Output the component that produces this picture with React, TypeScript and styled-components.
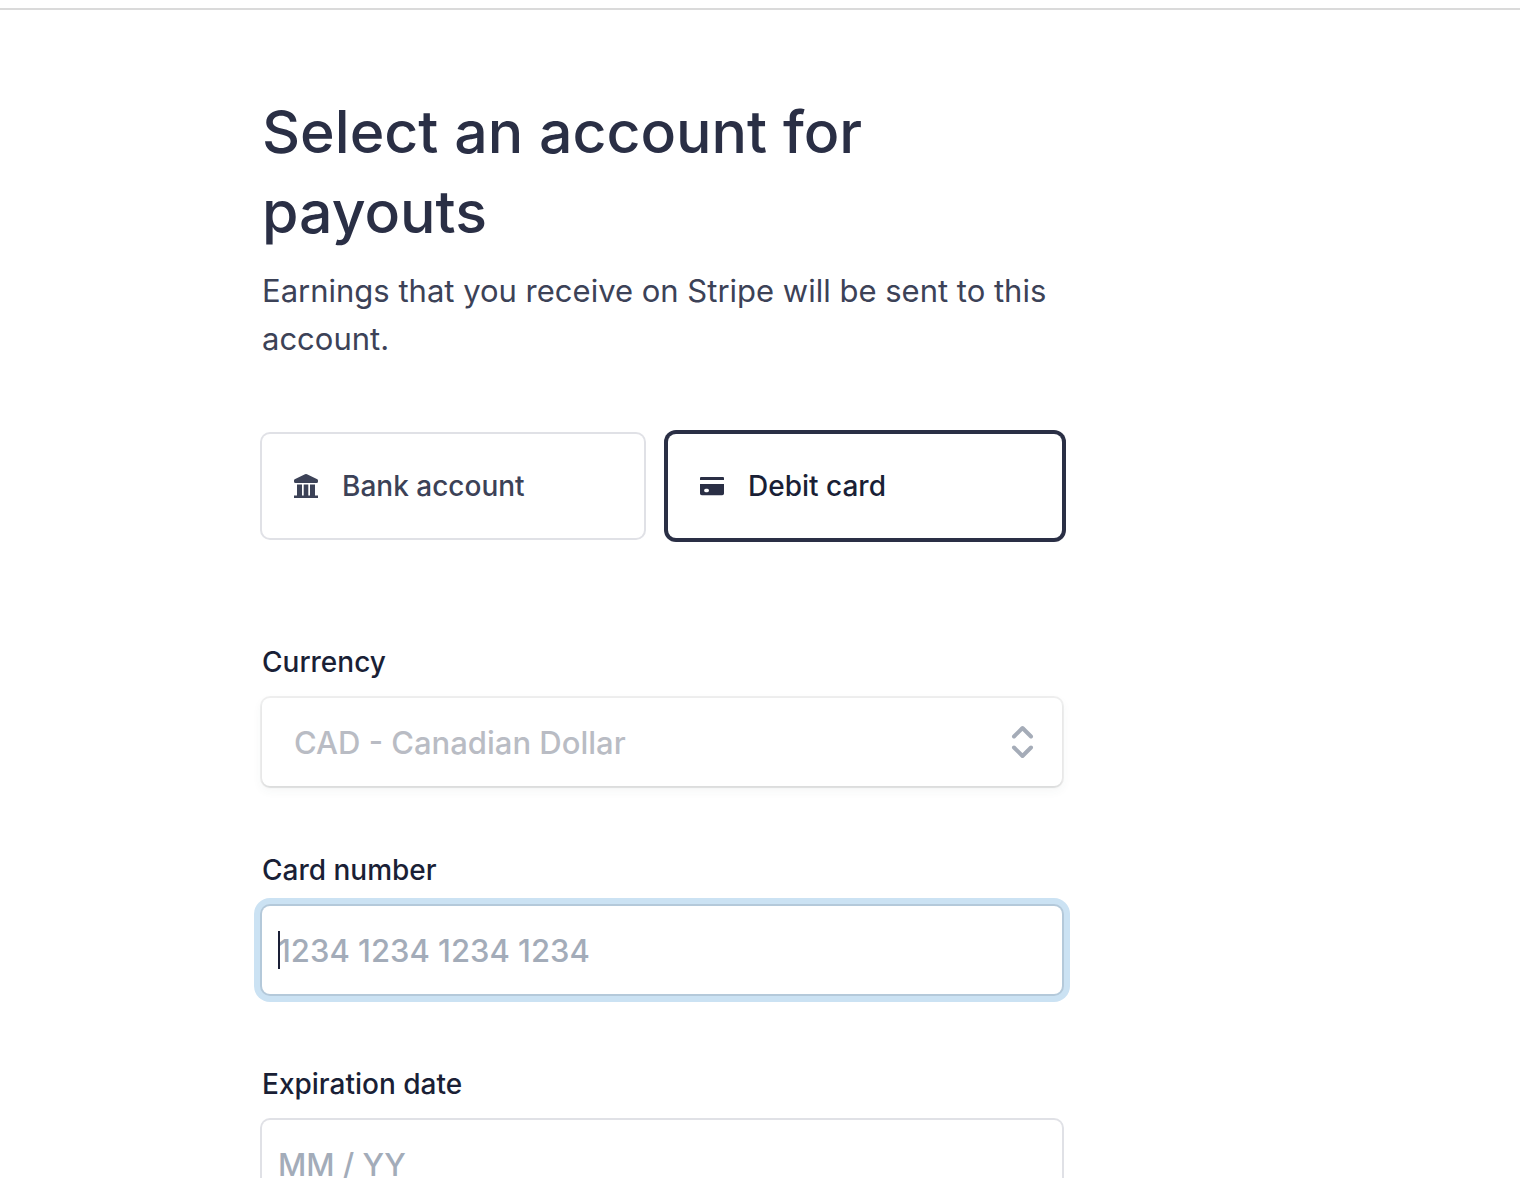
import React, { useState } from 'react';
import styled, { createGlobalStyle, css } from 'styled-components';

const GlobalStyle = createGlobalStyle`
  *, *::before, *::after { box-sizing: border-box; }
  body {
    margin: 0;
    background: #ffffff;
    color: #1a1f36;
    font-family: Inter, "Liberation Sans", sans-serif;
    -webkit-font-smoothing: antialiased;
  }
`;

const Page = styled.div`
  height: 100vh;
  overflow-y: auto;
  scrollbar-width: none;
`;

const TopBar = styled.header`
  height: 10px;
  border-bottom: 2px solid #dadada;
`;

const Content = styled.main`
  max-width: 1062px;
  padding: 82px 0 80px 262px;
`;

const Title = styled.h1`
  margin: 0 0 15px;
  color: #2a2f45;
  font-size: 59px;
  font-weight: 500;
  line-height: 80px;
`;

const Lead = styled.p`
  margin: 0 0 71px;
  color: #3c4257;
  font-size: 31px;
  line-height: 48px;
`;

const Methods = styled.div`
  display: grid;
  grid-template-columns: 382fr 394fr;
  gap: 24px;
  margin-bottom: 104px;
`;

const Method = styled.label<{ $selected: boolean }>`
  position: relative;
  display: flex;
  align-items: center;
  gap: 24px;
  height: 104px;
  padding: 0 32px;
  border-radius: 8px;
  color: #3c4257;
  font-size: 28px;
  font-weight: 500;
  line-height: 40px;
  cursor: pointer;
  box-shadow: 0 0 0 2px #e0e1e6;
  ${(p) =>
    p.$selected &&
    css`
      color: #1a1f36;
      box-shadow: 0 0 0 4px #2a2f45;
    `}
`;

const MethodInput = styled.input`
  position: absolute;
  inset: 0;
  margin: 0;
  opacity: 0;
  cursor: pointer;
`;

const MethodIcon = styled.svg`
  flex: none;
  width: 24px;
  height: 24px;
`;

const Form = styled.form`
  display: grid;
`;

const Field = styled.div<{ $spacing?: number }>`
  display: grid;
  gap: 16px;
  margin-bottom: ${(p) => p.$spacing ?? 64}px;
`;

const Label = styled.label`
  font-size: 28px;
  font-weight: 500;
  line-height: 40px;
`;

const Control = styled.div`
  position: relative;
  display: grid;
`;

const controlStyle = css`
  width: 100%;
  height: 88px;
  border: 0;
  border-radius: 8px;
  outline: none;
  background: #ffffff;
  font-family: inherit;
  font-size: 31px;
  font-weight: 500;
`;

const Select = styled.select`
  ${controlStyle}
  appearance: none;
  padding: 0 64px 0 32px;
  color: #b9bcc4;
  opacity: 1;
  box-shadow: 0 0 0 2px rgba(0, 0, 0, 0.06), 0 2px 2px rgba(0, 0, 0, 0.06),
    0 4px 10px 2px rgba(60, 66, 87, 0.04);
`;

const SelectArrows = styled.svg`
  position: absolute;
  top: 26px;
  right: 28px;
  width: 24px;
  height: 36px;
  fill: none;
  stroke: #a5acb8;
  stroke-width: 4;
  stroke-linecap: round;
  stroke-linejoin: round;
  pointer-events: none;
`;

const Input = styled.input<{ $active?: boolean }>`
  ${controlStyle}
  padding: 0 16px;
  color: #3c4257;
  box-shadow: 0 0 0 2px #e0e1e6;
  &::placeholder {
    color: #a3acb9;
    opacity: 1;
  }
  ${(p) =>
    p.$active &&
    css`
      caret-color: transparent;
      box-shadow: 0 0 0 2px #b4c9da, 0 0 0 8px #cbe2f3;
    `}
`;

const Caret = styled.span`
  position: absolute;
  top: 25px;
  left: 16px;
  width: 2px;
  height: 38px;
  background: #1a1f36;
  pointer-events: none;
`;

function BankIcon() {
  return (
    <MethodIcon viewBox="0 0 24 24" fill="#3c4257" aria-hidden="true">
      <path d="M11 .3Q12-.2 13 .3L23.300 5.300Q24 5.700 24 6.400V7.500Q24 9 22.500 9H1.500Q0 9 0 7.500V6.400Q0 5.700.7 5.300Z" />
      <path d="M3 10.500h5V21.500h1.700v-11h4.600v11H16v-11h5V21.500h3V24H0v-2.500h3z" />
    </MethodIcon>
  );
}

function CardIcon() {
  return (
    <MethodIcon viewBox="0 0 24 24" fill="#2a2f45" aria-hidden="true">
      <path d="M0 6V4q0-1 1-1h22q1 0 1 1v2z" />
      <path
        fillRule="evenodd"
        d="M0 10h24v9.500q0 1.800-1.800 1.800H1.800Q0 21.300 0 19.500zM5.800 14.800a1.700 1.700 0 0 0 0 3.400h1.500a1.700 1.700 0 0 0 0-3.400z"
      />
    </MethodIcon>
  );
}

export default function App() {
  const [method, setMethod] = useState('card');
  const [number, setNumber] = useState('');

  return (
    <>
      <GlobalStyle />
      <Page>
        <TopBar />
        <Content>
          <Title>Select an account for payouts</Title>
          <Lead>Earnings that you receive on Stripe will be sent to this account.</Lead>
          <Methods role="radiogroup" aria-label="Payout method">
            <Method $selected={method === 'bank'}>
              <MethodInput
                type="radio"
                name="method"
                checked={method === 'bank'}
                onChange={() => setMethod('bank')}
              />
              <BankIcon />
              Bank account
            </Method>
            <Method $selected={method === 'card'}>
              <MethodInput
                type="radio"
                name="method"
                checked={method === 'card'}
                onChange={() => setMethod('card')}
              />
              <CardIcon />
              Debit card
            </Method>
          </Methods>
          <Form>
            <Field>
              <Label htmlFor="currency">Currency</Label>
              <Control>
                <Select id="currency" disabled defaultValue="cad">
                  <option value="cad">CAD - Canadian Dollar</option>
                </Select>
                <SelectArrows viewBox="0 0 24 36" aria-hidden="true">
                  <path d="M4 12.500L12.500 4l8.500 8.500M4 23.500l8.500 8.500 8.500-8.500" />
                </SelectArrows>
              </Control>
            </Field>
            <Field $spacing={70}>
              <Label htmlFor="number">Card number</Label>
              <Control>
                <Input
                  id="number"
                  $active
                  inputMode="numeric"
                  placeholder="1234 1234 1234 1234"
                  value={number}
                  onChange={(e) => setNumber(e.target.value)}
                />
                {number === '' && <Caret />}
              </Control>
            </Field>
            <Field>
              <Label htmlFor="expiry">Expiration date</Label>
              <Control>
                <Input id="expiry" inputMode="numeric" placeholder="MM / YY" />
              </Control>
            </Field>
          </Form>
        </Content>
      </Page>
    </>
  );
}
